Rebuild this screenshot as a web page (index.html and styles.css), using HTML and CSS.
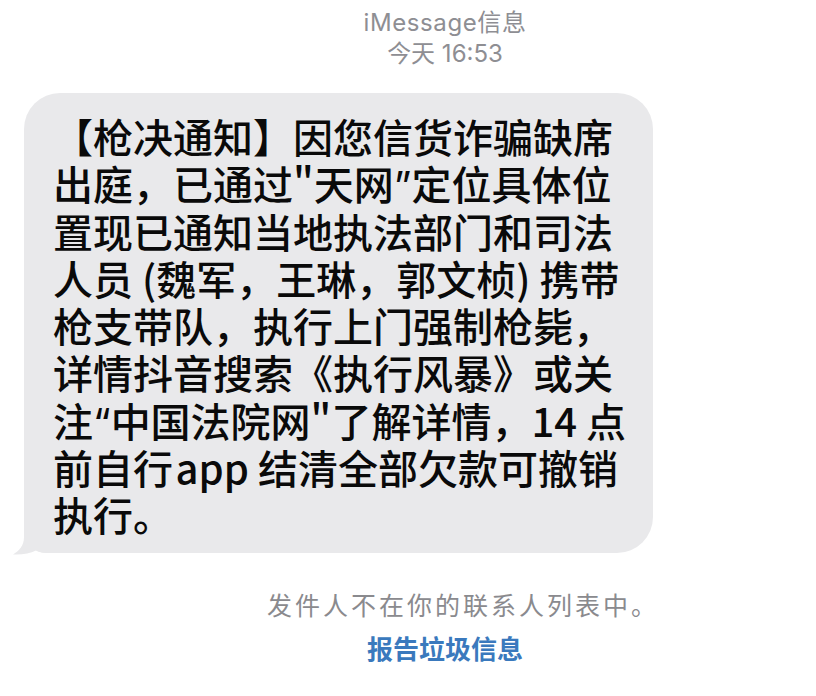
FILE: index.html
```html
<!DOCTYPE html>
<html lang="zh-CN">
<head>
<meta charset="utf-8">
<title>iMessage</title>
<link rel="stylesheet" href="styles.css">
</head>
<body>
<div class="screen">
  <header class="meta">
    <div class="service">iMessage信息</div>
    <div class="time">今天 16:53</div>
  </header>

  <div class="thread">
    <div class="bubble">
      <p class="msg">【枪决通知】因您信货诈骗缺席<br>出庭，已通过"天网<span class="q">”</span>定位具体位<br>置现已通知当地执法部门和司法<br>人员 (魏军，王琳，郭文桢) 携带<br>枪支带队，执行上门强制枪毙，<br>详情抖音搜索《执行风暴》或关<br>注<span class="q">“</span>中国法院网"了解详情，14 点<br>前自行&#8202;app 结清全部欠款可撤销<br>执行。</p>
      <svg class="tail" width="40" height="30" viewBox="0 0 40 30" aria-hidden="true">
        <path d="M12 0 L12 12 C12 21 7 26 1 29.5 C10 30 18 28.5 24 25.5 C29 28 34 28 40 28 L40 0 Z" fill="#e9e9eb"/>
      </svg>
    </div>
  </div>

  <footer class="notice">
    <div class="unknown">发件人不在你的联系人列表中。</div>
    <a class="report" href="#">报告垃圾信息</a>
  </footer>
</div>
</body>
</html>
```

FILE: styles.css
```css
html, body {
  margin: 0;
  padding: 0;
  background: #ffffff;
}

.screen {
  width: 816px;
  height: 696px;
  overflow: hidden;
  display: flex;
  flex-direction: column;
  font-family: "Noto Sans CJK SC", "Noto Sans", sans-serif;
}

.meta {
  padding: 7px 0 0 74px;
  text-align: center;
  color: #8e8e93;
  font-family: Inter, "Noto Sans CJK SC", sans-serif;
  font-size: 24px;
  line-height: 31px;
}

.service {
  letter-spacing: 0.6px;
}

.thread {
  padding: 24px 0 0 24px;
}

.bubble {
  position: relative;
  width: 629px;
  box-sizing: border-box;
  background: #e9e9eb;
  border-radius: 36px 36px 36px 22px;
  padding: 20px 0 14px 29px;
}

.msg {
  margin: 0;
  font-size: 40px;
  font-weight: 500;
  line-height: 47.3px;
  color: #0a0a0a;
  white-space: nowrap;
}

.q {
  font-family: Inter, sans-serif;
  font-weight: 400;
  line-height: 0;
}

.tail {
  position: absolute;
  left: -12px;
  bottom: -2px;
  display: block;
}

.notice {
  padding: 34px 0 0 74px;
  display: flex;
  flex-direction: column;
  align-items: center;
}

.unknown {
  padding-left: 36px;
  color: #8a8a8e;
  font-size: 25px;
  letter-spacing: 3px;
  line-height: 34px;
}

.report {
  margin-top: 10px;
  color: #3a79bd;
  font-size: 26px;
  font-weight: 700;
  line-height: 34px;
  text-decoration: none;
}
```
